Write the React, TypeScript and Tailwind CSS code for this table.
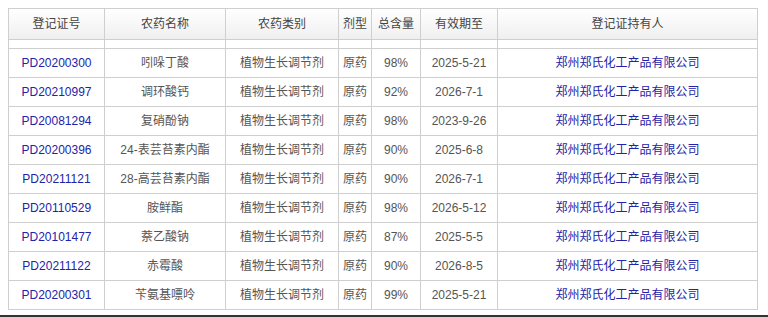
import React from "react";

const rows = [
  ["PD20200300", "吲哚丁酸", "植物生长调节剂", "原药", "98%", "2025-5-21"],
  ["PD20210997", "调环酸钙", "植物生长调节剂", "原药", "92%", "2026-7-1"],
  ["PD20081294", "复硝酚钠", "植物生长调节剂", "原药", "98%", "2023-9-26"],
  ["PD20200396", "24-表芸苔素内酯", "植物生长调节剂", "原药", "90%", "2025-6-8"],
  ["PD20211121", "28-高芸苔素内酯", "植物生长调节剂", "原药", "90%", "2026-7-1"],
  ["PD20110529", "胺鲜酯", "植物生长调节剂", "原药", "98%", "2026-5-12"],
  ["PD20101477", "萘乙酸钠", "植物生长调节剂", "原药", "87%", "2025-5-5"],
  ["PD20211122", "赤霉酸", "植物生长调节剂", "原药", "90%", "2026-8-5"],
  ["PD20200301", "苄氨基嘌呤", "植物生长调节剂", "原药", "99%", "2025-5-21"],
];

const widths = ["w-[96px]", "w-[121px]", "w-[113px]", "w-[33px]", "w-[49px]", "w-[77px]", "w-[260px]"];
const heads = ["登记证号", "农药名称", "农药类别", "剂型", "总含量", "有效期至", "登记证持有人"];

export default function App() {
  return (
    <div
      className="w-[768px] h-[317px] bg-white relative overflow-hidden"
      style={{ fontFamily: '"Liberation Sans", Arial, "Noto Sans CJK SC", sans-serif' }}
    >
      <div className="pt-[8px] pl-[8px]">
        <table className="border-collapse table-fixed w-[750px] text-[12px] text-[#555]">
          <colgroup>
            {widths.map((w, i) => (
              <col key={i} className={w} />
            ))}
          </colgroup>
          <thead>
            <tr className="h-[31px] bg-gradient-to-b from-white to-[#efefef]">
              {heads.map((h) => (
                <th key={h} className="border border-[#cfcfcf] font-normal text-[#444] text-center p-0 leading-none">
                  {h}
                </th>
              ))}
            </tr>
          </thead>
          <tbody>
            <tr className="h-[9px]">
              {heads.map((h) => (
                <td key={h} className="border border-[#cfcfcf] p-0"></td>
              ))}
            </tr>
            {rows.map((r) => (
              <tr key={r[0]} className="h-[29px]">
                <td className="border border-[#cfcfcf] text-center p-0 text-[#2323a8]">{r[0]}</td>
                <td className="border border-[#cfcfcf] text-center p-0">{r[1]}</td>
                <td className="border border-[#cfcfcf] text-center p-0">{r[2]}</td>
                <td className="border border-[#cfcfcf] text-center p-0">{r[3]}</td>
                <td className="border border-[#cfcfcf] text-center p-0">{r[4]}</td>
                <td className="border border-[#cfcfcf] text-center p-0">{r[5]}</td>
                <td className="border border-[#cfcfcf] text-center p-0 text-[#2323a8]">郑州郑氏化工产品有限公司</td>
              </tr>
            ))}
          </tbody>
        </table>
      </div>
      <div className="absolute left-0 right-0 top-[315px] h-[2px] bg-[#333]"></div>
    </div>
  );
}
